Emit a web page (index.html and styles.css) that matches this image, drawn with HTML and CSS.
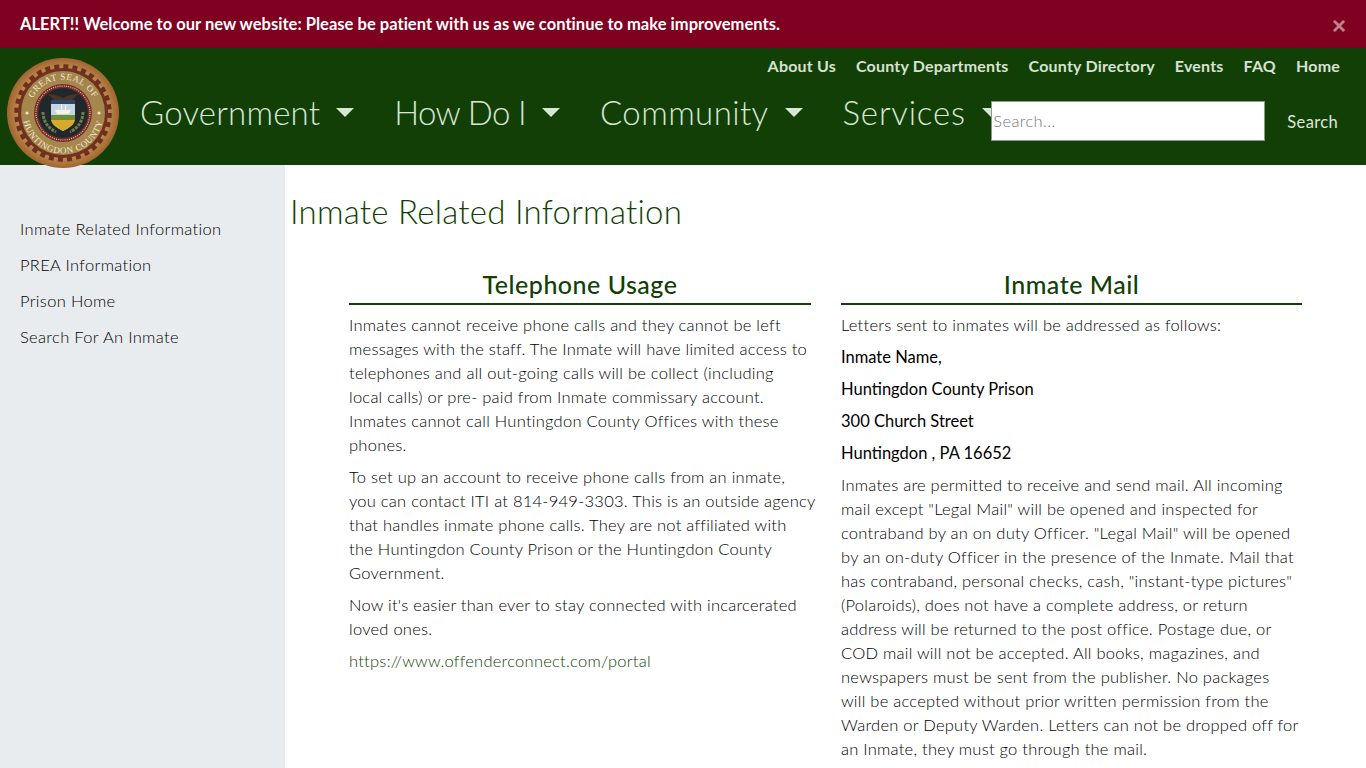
FILE: index.html
```html
<!DOCTYPE html>
<html lang="en">
<head>
    <meta charset="UTF-8">
    <meta name="viewport" content="width=device-width, initial-scale=1.0">
    <title>Inmate Related Information</title>
    <link rel="stylesheet" href="styles.css">
</head>
<body>
    <div class="alert">
        <strong>ALERT!! Welcome to our new website: Please be patient with us as we continue to make improvements.</strong>
        <button class="close" type="button">×</button>
    </div>

    <header class="site-header">
        <a class="seal" href="#">
            <svg viewBox="0 0 112 110" width="112" height="110">
                <defs>
                    <path id="arc-top" d="M22.5 55a33.5 33.5 0 0 1 67 0"/>
                    <path id="arc-bottom" d="M15.5 55a40.5 40.5 0 0 0 81 0"/>
                    <radialGradient id="wood">
                        <stop offset="0.8" stop-color="#c08b50"/>
                        <stop offset="1" stop-color="#a0652f"/>
                    </radialGradient>
                </defs>
                <ellipse cx="56" cy="55" rx="56" ry="55" fill="url(#wood)"/>
                <circle cx="56" cy="55" r="46.5" fill="none" stroke="#6d2f1f" stroke-width="4.5" stroke-dasharray="5 4.13"/>
                <circle cx="56" cy="55" r="45" fill="#70321f"/>
                <circle cx="56" cy="55" r="42" fill="#a5864d"/>
                <text class="seal-text"><textPath href="#arc-top" startOffset="50%" text-anchor="middle">GREAT SEAL OF</textPath></text>
                <text class="seal-text"><textPath href="#arc-bottom" startOffset="50%" text-anchor="middle">HUNTINGDON COUNTY</textPath></text>
                <circle cx="20" cy="55" r="1.6" fill="#efe3c6"/>
                <circle cx="92" cy="55" r="1.6" fill="#efe3c6"/>
                <circle cx="56" cy="55" r="29" fill="#7a2c2a"/>
                <circle cx="56" cy="55" r="27" fill="none" stroke="#d9c9a8" stroke-width="1.2" stroke-dasharray="1 1.2"/>
                <circle cx="56" cy="55" r="25" fill="#20282b"/>
                <path d="M44 42h24v16c0 8-6 12-12 15-6-3-12-7-12-15z" fill="#c4d6e2"/>
                <path d="M44 42h24v4H44z" fill="#2c4467"/>
                <path d="M48 52h16l-2 4H50zM54 46h1v6h-1zM58 47h1v5h-1z" fill="#f4f1e8"/>
                <path d="M44 57h24v5H44z" fill="#6f8f35"/>
                <path d="M44 62h24c-1 5-6 8-12 11-6-3-11-6-12-11z" fill="#d6aa2c"/>
                <path d="M41 36c5 0 10 1 15 4 5-3 10-4 15-4l-6 6H47z" fill="#4a3425"/>
                <path d="M36 54c0 9 5 16 13 20M76 54c0 9-5 16-13 20" fill="none" stroke="#6b7d4c" stroke-width="3" stroke-dasharray="3 1"/>
            </svg>
        </a>
        <div class="header-right">
            <ul class="top-links">
                <li><a href="#">About Us</a></li>
                <li><a href="#">County Departments</a></li>
                <li><a href="#">County Directory</a></li>
                <li><a href="#">Events</a></li>
                <li><a href="#">FAQ</a></li>
                <li><a href="#">Home</a></li>
            </ul>
            <div class="main-row">
                <ul class="main-nav">
                    <li><a class="caret" href="#">Government</a></li>
                    <li><a class="caret tight" href="#">How Do I</a></li>
                    <li><a class="caret roomy" href="#">Community</a></li>
                    <li><a class="caret wide" href="#">Services</a></li>
                </ul>
                <form class="search">
                    <input type="text" placeholder="Search...">
                    <button type="button">Search</button>
                </form>
            </div>
        </div>
    </header>

    <div class="page">
        <nav class="sidebar">
            <a href="#">Inmate Related Information</a>
            <a href="#">PREA Information</a>
            <a href="#">Prison Home</a>
            <a href="#">Search For An Inmate</a>
        </nav>
        <main class="content">
            <h1>Inmate Related Information</h1>
            <div class="columns">
                <section>
                    <h2>Telephone Usage</h2>
                    <p>Inmates cannot receive phone calls and they cannot be left messages with the staff. The Inmate will have limited access to telephones and all out-going calls will be collect (including local calls) or pre- paid from Inmate commissary account. Inmates cannot call Huntingdon County Offices with these phones.</p>
                    <p class="pinned">To set up an account to receive phone calls from an inmate,<br>you can contact ITI at 814-949-3303. This is an outside agency<br>that handles inmate phone calls. They are not affiliated with<br>the Huntingdon County Prison or the Huntingdon County<br>Government.</p>
                    <p>Now it's easier than ever to stay connected with incarcerated loved ones.</p>
                    <p><a href="#">https://www.offenderconnect.com/portal</a></p>
                </section>
                <section>
                    <h2>Inmate Mail</h2>
                    <p>Letters sent to inmates will be addressed as follows:</p>
                    <p class="address">Inmate Name,</p>
                    <p class="address">Huntingdon County Prison</p>
                    <p class="address">300 Church Street</p>
                    <p class="address">Huntingdon , PA 16652</p>
                    <p class="pinned">Inmates are permitted to receive and send mail. All incoming<br>mail except "Legal Mail" will be opened and inspected for<br>contraband by an on duty Officer. "Legal Mail" will be opened<br>by an on-duty Officer in the presence of the Inmate. Mail that<br>has contraband, personal checks, cash, "instant-type pictures"<br>(Polaroids), does not have a complete address, or return<br>address will be returned to the post office. Postage due, or<br>COD mail will not be accepted. All books, magazines, and<br>newspapers must be sent from the publisher. No packages<br>will be accepted without prior written permission from the<br>Warden or Deputy Warden. Letters can not be dropped off for<br>an Inmate, they must go through the mail.</p>
                </section>
            </div>
        </main>
    </div>
</body>
</html>
```

FILE: styles.css
```css
* {
    box-sizing: border-box;
}
body {
    margin: 0;
    font-family: Lato, "Open Sans", sans-serif;
    font-size: 16.5px;
    font-weight: 300;
    line-height: 24px;
    letter-spacing: 0.25px;
    color: #000;
    background: #fff;
}
a {
    text-decoration: none;
}
ul {
    list-style: none;
    margin: 0;
    padding: 0;
}

.alert {
    display: flex;
    justify-content: space-between;
    height: 48px;
    padding: 12px 20px;
    background: #7f0020;
    color: #fff;
}
.alert strong {
    font-size: 16.5px;
    font-weight: 700;
    letter-spacing: 0.03px;
}
.close {
    margin: 2px 0 0;
    padding: 0;
    border: none;
    background: none;
    color: #fff;
    opacity: 0.5;
    font-family: "Liberation Sans", sans-serif;
    font-size: 24px;
    font-weight: 700;
    line-height: 24px;
}

.site-header {
    display: flex;
    height: 117px;
    background: #123f05;
}
.seal {
    flex: none;
    height: 110px;
    margin: 10px 0 0 7px;
    position: relative;
    z-index: 1;
}
.seal-text {
    font-family: "Liberation Serif", serif;
    font-size: 9px;
    font-weight: 400;
    letter-spacing: 0.6px;
    fill: #f3e8cd;
}
.header-right {
    flex: 1;
    min-width: 0;
}
.top-links {
    display: flex;
    justify-content: flex-end;
    gap: 20px;
    padding: 6px 26px 0 0;
}
.top-links a {
    color: #d8e2d2;
    font-size: 16px;
    font-weight: 700;
    letter-spacing: 0.2px;
}
.main-row {
    display: flex;
    align-items: flex-start;
    justify-content: space-between;
    margin-top: 10px;
}
.main-nav {
    display: flex;
    gap: 40px;
    padding-left: 21px;
    width: 865px;
    flex: none;
}
.main-nav a {
    color: #d8e6d6;
    font-size: 33px;
    line-height: 48px;
    letter-spacing: 0.2px;
    white-space: nowrap;
}
.main-nav a.tight {
    letter-spacing: -0.65px;
}
.main-nav a.roomy {
    letter-spacing: 0.4px;
}
.main-nav a.wide {
    letter-spacing: 0.8px;
}
.caret::after {
    content: "";
    display: inline-block;
    margin-left: 16px;
    vertical-align: 8px;
    border-top: 9px solid #d8e6d6;
    border-left: 9px solid transparent;
    border-right: 9px solid transparent;
}
.search {
    display: flex;
    align-items: center;
    position: relative;
    margin-top: 13px;
    padding-right: 28px;
}
.search input {
    width: 274px;
    height: 40px;
    padding: 0 1px;
    border: 1px solid #8a9a84;
    border-radius: 0;
    background: #fff;
    font: inherit;
    letter-spacing: 0.35px;
}
.search input::placeholder {
    color: #777;
}
.search button {
    margin-left: 22px;
    padding: 2px 0 0;
    border: none;
    background: none;
    color: #dfe8da;
    font: inherit;
    letter-spacing: 0.35px;
    font-weight: 400;
}

.page {
    display: flex;
    min-height: calc(100vh - 165px);
}
.sidebar {
    flex: none;
    width: 285px;
    padding: 52px 20px 0;
    background: #e9ecef;
    letter-spacing: 0.33px;
}
.sidebar a {
    display: block;
    margin-bottom: 12px;
    color: #000;
}
.content {
    flex: 1;
    min-width: 0;
    padding: 26px 64px 0 5px;
}
h1 {
    margin: 0 0 39px;
    font-size: 33px;
    font-weight: 300;
    line-height: 40px;
    letter-spacing: 0.25px;
    color: #123f05;
}
.columns {
    display: grid;
    grid-template-columns: 462px 461px;
    gap: 30px;
    margin-left: 59px;
}
h2 {
    margin: 0 0 8px;
    padding-bottom: 4px;
    border-bottom: 2px solid #123f05;
    font-size: 25px;
    font-weight: 500;
    line-height: 29px;
    letter-spacing: 0.5px;
    text-align: center;
    color: #123f05;
}
p {
    margin: 0 0 8px;
}
.pinned {
    white-space: nowrap;
}
section p:last-child {
    margin-bottom: 0;
}
p a {
    color: #123f05;
}
.address {
    font-weight: 400;
    letter-spacing: 0;
}
```
